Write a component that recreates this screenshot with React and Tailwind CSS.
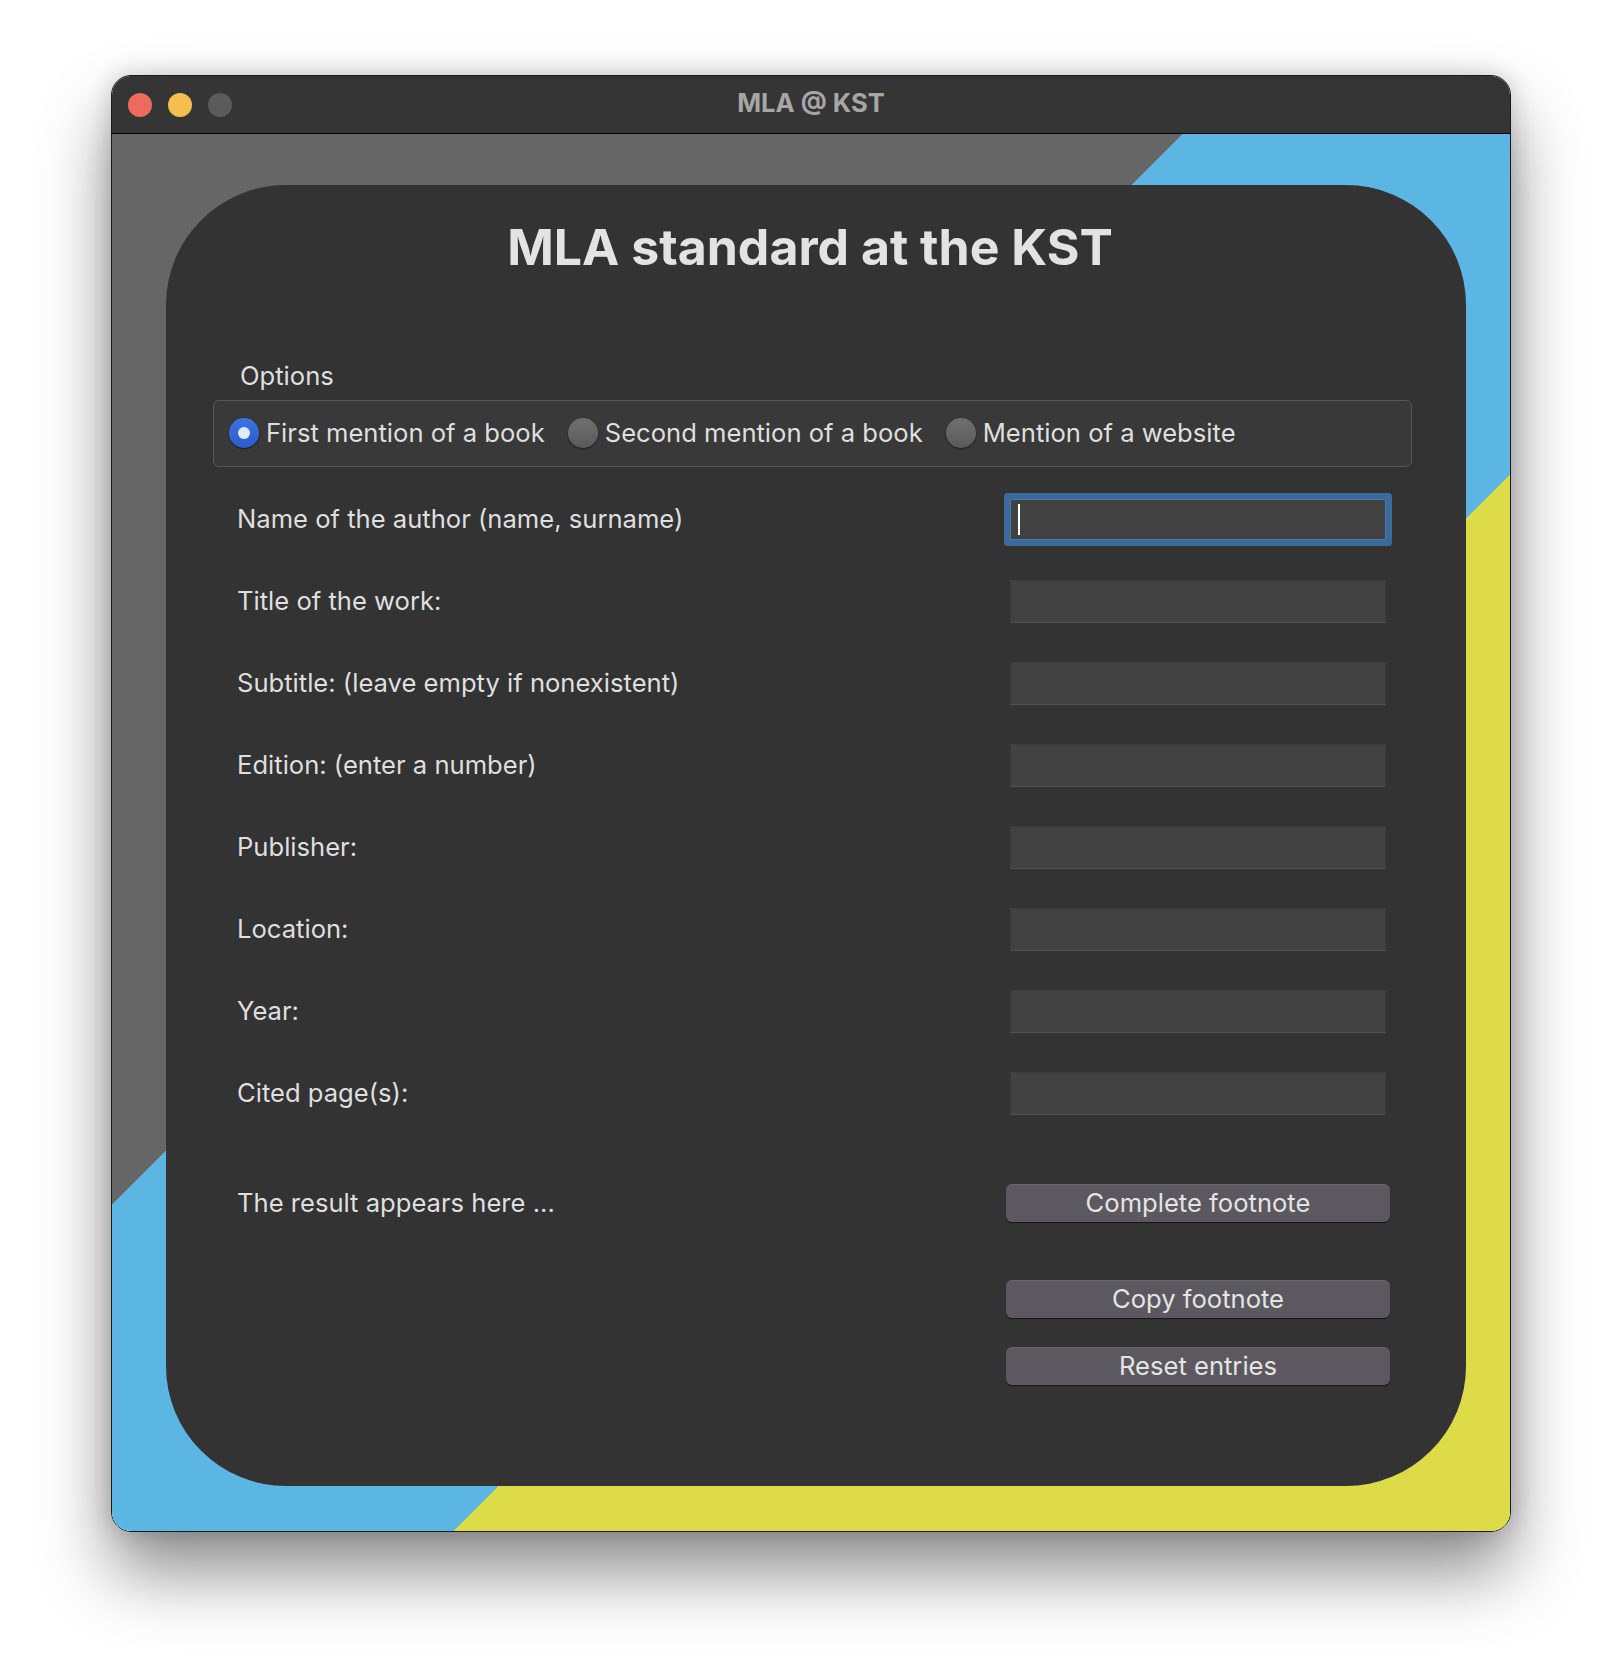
import { useState } from "react";

const fields = [
  "Name of the author (name, surname)",
  "Title of the work:",
  "Subtitle: (leave empty if nonexistent)",
  "Edition: (enter a number)",
  "Publisher:",
  "Location:",
  "Year:",
  "Cited page(s):",
];

const options = [
  "First mention of a book",
  "Second mention of a book",
  "Mention of a website",
];

const Radio = ({ checked }) =>
  checked ? (
    <span className="flex h-[30px] w-[30px] shrink-0 items-center justify-center rounded-full bg-gradient-to-b from-[#3b74e2] to-[#2a5ccd] shadow-[0_1px_2px_rgba(0,0,0,0.55)]">
      <span className="h-[12px] w-[12px] rounded-full bg-[#e2e9f8]" />
    </span>
  ) : (
    <span className="h-[30px] w-[30px] shrink-0 rounded-full bg-gradient-to-b from-[#707070] to-[#5a5a5a] shadow-[0_1px_2px_rgba(0,0,0,0.55)]" />
  );

const Button = ({ children }) => (
  <button className="h-[38px] w-[384px] rounded-[6px] bg-[#5b595f] text-[25.6px] leading-[38px] text-[#e4e4e4] shadow-[0_1px_1px_rgba(0,0,0,0.6),inset_0_1px_0_rgba(255,255,255,0.08)]">
    {children}
  </button>
);

const App = () => {
  const [selected, setSelected] = useState(0);
  const [focused, setFocused] = useState(0);

  return (
    <div className="min-h-[1680px] bg-white pl-[111px] pt-[75px] font-['Inter',sans-serif]">
      <div className="flex h-[1457px] w-[1400px] flex-col overflow-hidden rounded-[20px] border border-[#1a1a1a] shadow-[0_40px_70px_rgba(0,0,0,0.45),0_0_24px_rgba(0,0,0,0.18)]">
        {/* Title bar */}
        <div className="grid h-[58px] shrink-0 grid-cols-[1fr_auto_1fr] items-center border-b border-black bg-[#353535] pl-[16px] pr-[16px]">
          <div className="flex gap-[16px]">
            <span className="h-[24px] w-[24px] rounded-full bg-[#ec6a5e]" />
            <span className="h-[24px] w-[24px] rounded-full bg-[#f4bf4f]" />
            <span className="h-[24px] w-[24px] rounded-full bg-[#5b5b5b]" />
          </div>
          <div className="pb-[2px] text-[25.6px] font-bold text-[#a6a6a6]">MLA @ KST</div>
          <div />
        </div>

        {/* Background with stripes */}
        <div className="flex-1 bg-[linear-gradient(135deg,#666666_38.3%,#5cb6e3_38.3%,#5cb6e3_62.2%,#dedb49_62.2%)] pl-[54px] pt-[51px]">
          <div className="flex h-[1301px] w-[1300px] flex-col rounded-[120px] bg-[#333333] text-[#dfdfdf]">
            <h1 className="mt-[37px] pr-[12px] text-center text-[50px] font-bold leading-[50px] text-[#e3e3e3]">
              MLA standard at the KST
            </h1>

            <div className="ml-[47px] flex flex-col text-[25.6px]">
              <div className="ml-[27px] mt-[88px] leading-[32px]">Options</div>

              <div className="mt-[8px] flex h-[67px] w-[1199px] items-center gap-[23px] rounded-[6px] border border-[#585858] bg-[#393939] pl-[15px]">
                {options.map((opt, i) => (
                  <div
                    key={opt}
                    onClick={() => setSelected(i)}
                    className="flex cursor-default items-center gap-[7px]"
                  >
                    <Radio checked={selected === i} />
                    <span>{opt}</span>
                  </div>
                ))}
              </div>

              <div className="mt-[11px] flex flex-col pl-[24px]">
                {fields.map((label, i) => (
                  <div key={label} className="flex h-[82px] items-center">
                    <div className="w-[773px]">{label}</div>
                    {focused === i ? (
                      <div className="flex h-[41px] w-[376px] items-center rounded-[1px] border border-[#4a7aab] bg-[#424242] pl-[7px] shadow-[0_0_0_6px_#3b6b9b]">
                        <span className="h-[31px] w-[2px] bg-white" />
                      </div>
                    ) : (
                      <div
                        onClick={() => setFocused(i)}
                        className="h-[43px] w-[376px] border border-[#3c3c3c] border-b-[#525252] bg-[#424242]"
                      />
                    )}
                  </div>
                ))}
              </div>

              <div className="mt-[50px] flex items-center pl-[24px]">
                <div className="w-[769px]">The result appears here ...</div>
                <Button>Complete footnote</Button>
              </div>

              <div className="ml-[793px] mt-[58px]">
                <Button>Copy footnote</Button>
              </div>
              <div className="ml-[793px] mt-[28px]">
                <Button>Reset entries</Button>
              </div>
            </div>
          </div>
        </div>
      </div>
    </div>
  );
};

export default App;
